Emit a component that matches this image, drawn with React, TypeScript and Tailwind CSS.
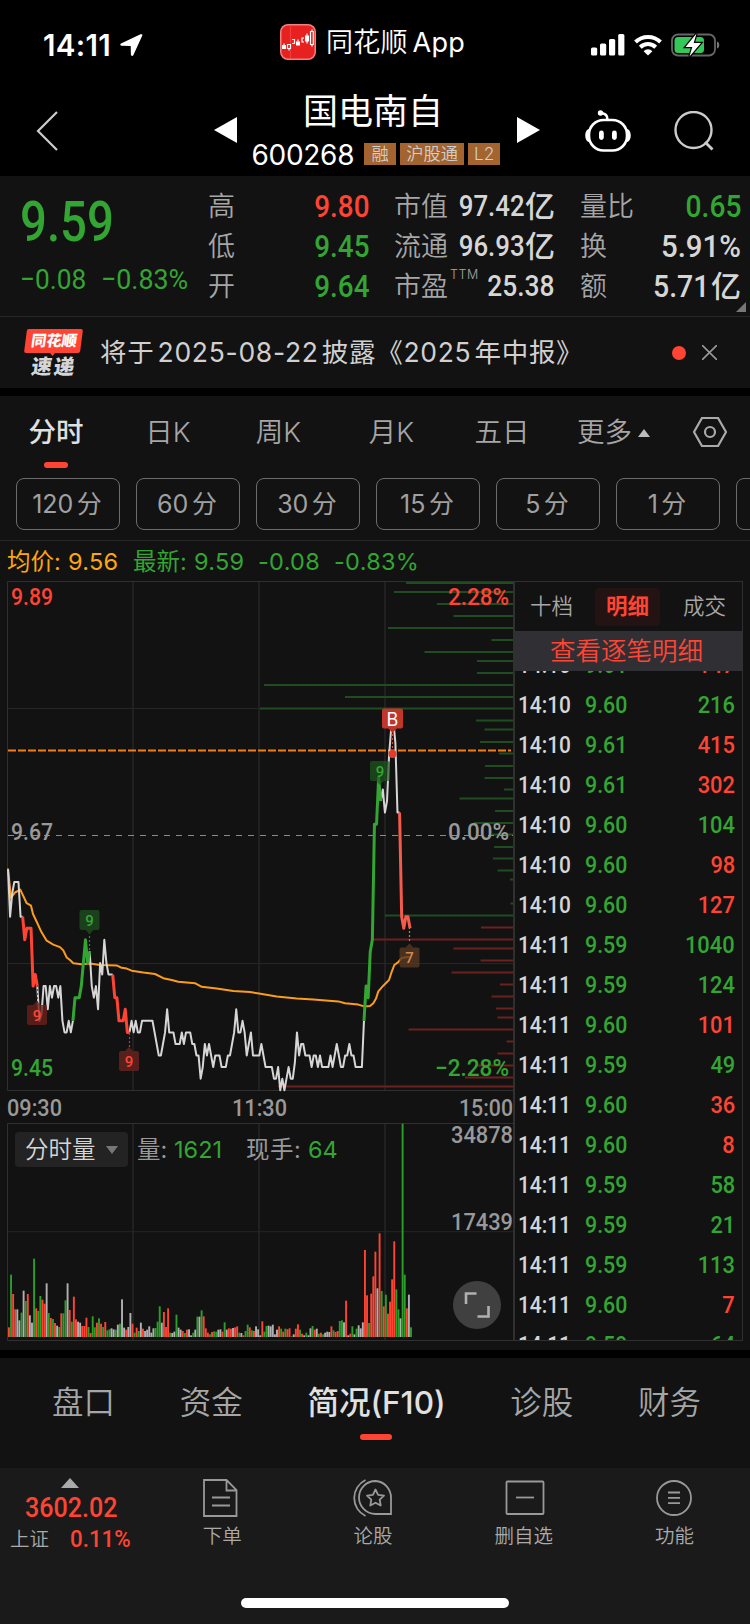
import type { ReactNode } from 'react';
import { clsx } from 'clsx';

const CJK = "font-['Inter','Noto_Sans_CJK_SC',sans-serif]";

const quotes = [
  [
    { label: '高', value: '9.80', tone: 'text-[#ff4433]', size: 'scale-x-[.87] text-[32px]' },
    { label: '低', value: '9.45', tone: 'text-[#33a533]', size: 'scale-x-[.87] text-[32px]' },
    { label: '开', value: '9.64', tone: 'text-[#33a533]', size: 'scale-x-[.87] text-[32px]' },
  ],
  [
    { label: '市值', value: '97.42', unit: '亿', size: 'scale-x-[.86] text-[30px]' },
    { label: '流通', value: '96.93', unit: '亿', size: 'scale-x-[.86] text-[30px]' },
    { label: '市盈', sup: 'TTM', value: '25.38', size: 'scale-x-[.88] text-[30px]' },
  ],
  [
    { label: '量比', value: '0.65', tone: 'text-[#33a533]', size: 'scale-x-[.88] text-[32px]' },
    { label: '换', value: '5.91%', size: 'scale-x-[.92] text-[32px]' },
    { label: '额', value: '5.71', unit: '亿', size: 'scale-x-[.89] text-[32px] mr-[2px]' },
  ],
];

const periods = [
  { label: '分时', width: 'w-[112px]', active: true },
  { label: '日K', width: 'w-[112px]' },
  { label: '周K', width: 'w-[109px]' },
  { label: '月K', width: 'w-[117px]' },
  { label: '五日', width: 'w-[104px]' },
];

const minutes = ['120 分', '60 分', '30 分', '15 分', '5 分', '1 分', ''];

const trades: [string, string, number, 'r' | 'g'][] = [
  ['14:10', '9.61', 147, 'r'],
  ['14:10', '9.60', 216, 'g'],
  ['14:10', '9.61', 415, 'r'],
  ['14:10', '9.61', 302, 'r'],
  ['14:10', '9.60', 104, 'g'],
  ['14:10', '9.60', 98, 'r'],
  ['14:10', '9.60', 127, 'r'],
  ['14:11', '9.59', 1040, 'g'],
  ['14:11', '9.59', 124, 'g'],
  ['14:11', '9.60', 101, 'r'],
  ['14:11', '9.59', 49, 'g'],
  ['14:11', '9.60', 36, 'r'],
  ['14:11', '9.60', 8, 'r'],
  ['14:11', '9.59', 58, 'g'],
  ['14:11', '9.59', 21, 'g'],
  ['14:11', '9.59', 113, 'g'],
  ['14:11', '9.60', 7, 'r'],
  ['14:11', '9.59', 64, 'g'],
];

// Price line: [minute since open, ticks below the previous close]
const segments: { color: string; width: number; pts: [number, number][] }[] = [
  { color: '#d6d6d6', width: 2, pts: [[0, 2.9], [1, 7], [2, 5], [3, 4], [5, 4], [6, 7], [7, 7]] },
  {
    color: '#d6d6d6', width: 2,
    pts: [[14, 13], [15, 16], [16, 15.4], [17, 13], [18, 13], [19, 15], [20, 13], [21, 14], [22, 13], [23, 13], [24, 14], [25, 13], [26, 16], [27, 17], [28, 17], [29, 16], [30, 17], [31, 16]],
  },
  {
    color: '#d6d6d6', width: 2,
    pts: [[39, 10], [40, 13], [41, 14], [42, 13], [43, 15], [44, 11], [45, 12], [46, 9], [47, 11], [48, 12], [50, 12]],
  },
  {
    color: '#d6d6d6', width: 2,
    pts: [
      [58, 17], [59, 16], [60, 17], [61, 16], [62, 17], [63, 17], [64, 16], [69, 16], [70, 17], [72, 19], [73, 19], [74, 18], [75, 17], [76, 15], [77, 17],
      [79, 17], [80, 18], [82, 18], [83, 17], [84, 18], [85, 17], [87, 17], [88, 18], [89, 18], [90, 19], [91, 19], [92, 21], [93, 20], [94, 18], [95, 19],
      [96, 18], [98, 20], [99, 19], [101, 19], [102, 20], [104, 20], [105, 19], [106, 19], [108, 17], [109, 15], [110, 17], [111, 17], [112, 16], [113, 17],
      [114, 19], [116, 17], [117, 19], [120, 19], [121, 18], [123, 20], [126, 20], [127, 21], [128, 21], [129, 20], [130, 22], [131, 21], [132, 22], [133, 21],
      [134, 20], [135, 21], [136, 21], [137, 19.6], [138, 17], [139, 19], [140, 18], [141, 18], [142, 19], [144, 19], [145, 20], [146, 19], [147, 19], [148, 20],
      [149, 19], [150, 20], [153, 20], [154, 19], [155, 20], [156, 19], [157, 18], [158, 19], [159, 20], [160, 20], [161, 19], [162, 19], [163, 18], [164, 19],
      [165, 19], [166, 20], [169, 20], [170, 16],
    ],
  },
  { color: '#d6d6d6', width: 2, pts: [[178, -3], [179, -4], [180, -2], [181, -3], [182, -7], [183, -9.3], [184, -10], [185, -8], [186, -2], [187, -2]] },
  { color: '#ff4433', width: 3, pts: [[7, 7], [8, 9], [9, 8], [11, 8], [12, 13], [13, 12], [14, 13]] },
  { color: '#33a533', width: 3, pts: [[31, 16], [32, 14], [34, 14], [35, 13], [36, 11], [37, 9], [38, 11], [39, 10]] },
  { color: '#ff4433', width: 3, pts: [[50, 12], [51, 14], [52, 14], [53, 16], [55, 16], [56, 15], [57, 17], [58, 17]] },
  { color: '#33a533', width: 3, pts: [[170, 16], [171, 13], [172, 14], [173, 10], [174, 9], [175, -1], [176, -1], [177, -5], [178, -3]] },
  { color: '#f45b4c', width: 3, pts: [[187, -2], [188, 7], [189, 8], [190, 7], [191, 7], [192, 8]] },
];

const average =
  '8,868.5 11,897.8 15,892.5 20.3,889.6 26.7,903.2 31,905.7 33,914 36.7,921.8 41.3,931.8 46.7,940.7 53.3,944.6 60,947.1 63.3,950.4 66.7,957.5 70,960 73.3,963.2 81.7,964.3 90,963.6 100,965 116.7,965.4 121.7,967.8 126.7,968.6 131.7,970.7 143.3,972.5 155,974 163.3,978.2 171.7,980 178.3,981.8 195,983.2 201.7,986.8 216.7,988.6 233.3,991 250,992.1 259,993.6 276.7,996.4 296.7,998.6 313.3,999.6 338.3,1001.4 345,1003.2 358.3,1004.6 364,1006.4 370,1006 373.3,1003.2 376,998.6 378.3,991.4 383.3,985.7 389,980 391.7,971.8 394.3,965 398.3,962.1 401.7,957.9 409.3,956.8';

// Price distribution bars, [y, left edge]; they all end at the right border
const sellDepth = [
  [583, 406], [592, 394], [604, 437], [616, 453.5], [628, 388], [640, 491.5], [652, 424.5], [661, 477], [673, 477], [685, 264], [697, 345], [708.5, 260],
  [720.5, 476], [729.5, 484.5], [742, 480], [753.5, 499], [766, 485], [778, 484.5], [789.5, 504], [798.5, 459.5], [811, 495], [823, 474], [834.5, 492],
  [847, 494], [858.5, 493], [870.5, 497.5], [879.5, 510], [903.5, 510.5], [915.5, 385],
];
const buyDepth = [
  [927.5, 481], [939.5, 372], [948.5, 453.5], [960.5, 480.5], [972.5, 451.5], [984.5, 500], [996.5, 491.5], [1008.5, 496], [1017.5, 497.5], [1029.5, 408.5],
  [1041.5, 506.5], [1053.5, 497.5], [1065.5, 477], [1077.5, 465], [1086.5, 278],
];

// One entry per minute: direction and height, full scale is 640
const volume =
  'r29 g187 r129 r83 w83 w50 g73 w139 g108 r129 w65 w43 g235 r86 g78 g123 r112 r100 w161 g72 r57 g54 r42 w34 g30 r71 g71 g110 w161 r81 g46 r121 r53 w46 w43 r33 r33 r58 g30 r12 g62 g29 r43 g56 r40 g30 r45 g20 g23 w26 w23 g22 w37 g40 w113 w28 r22 w30 w72 r40 g13 r28 g18 w43 r25 w18 w22 w32 w13 w26 g27 g46 g92 w43 r75 r30 r86 g13 w12 w16 g67 w28 w22 r18 g12 r22 w23 w5 g13 w22 g61 w61 g80 r62 r26 r13 g8 r15 g17 g16 w22 w23 r16 g44 w22 r26 r25 w27 r29 r32 g13 w12 r5 g18 g37 r29 g20 r18 w32 w23 w5 r47 g16 g33 w34 w32 w37 w8 w22 r32 g25 r16 g25 r23 r26 g2 w8 r25 r38 g22 r10 w5 g13 w5 w26 g33 r22 w25 g10 r13 g8 w13 w16 w15 r32 g20 r15 r18 g48 g50 w44 r109 w5 r10 g32 w8 g25 w35 w26 w44 r261 r125 g42 r130 r182 r256 w146 r311 g138 r92 g127 r70 r106 r173 r287 g143 g83 w56 g640 g187 r86 w127 g29'.split(' ');

const volumeColor: Record<string, string> = { r: '#ff4433', g: '#2a9f2a', w: '#b0b0b0' };

const minuteX = (i: number) => 8 + i * 2.094;
const tickY = (k: number) => 835.7 + k * 11.57;

function Din({ children, className }: { children: ReactNode; className?: string }) {
  return <span className={clsx("inline-block whitespace-nowrap font-['Roboto',sans-serif] font-medium", className)}>{children}</span>;
}

function StatusBar() {
  return (
    <div className="flex h-[88px] items-center pt-[2px]">
      <div className="flex w-[280px] items-center gap-[6px] pl-[43px]">
        <span className="w-[70px] text-[29.500px] font-semibold tracking-[.3px]">14:11</span>
        <svg width="24" height="24" viewBox="0 0 24 24" fill="#fff">
          <path d="M22.8 1.3c.6.3.7.8.4 1.5L14.300 22.200c-.5 1.100-2.300.9-2.400-.4l-.2-8.800-8.900-.2C1.200 12.700.8 11 2 10.400L21.500 1.300c.5-.2 1-.2 1.300 0z" />
        </svg>
      </div>
      <svg width="36" height="36" viewBox="0 0 36 36" className="mt-[-6px]">
        <rect width="36" height="36" rx="8" fill="#f28080" />
        <rect x="1.500" y="1.500" width="33" height="33" rx="6.500" fill="#e8201f" />
        <path d="M10.500 2v32" stroke="#f0504c" strokeWidth=".7" />
        <path d="M2 21h4v4H2zM16 17.500h4v4h-4zM25 11.500h4v6h-4z" fill="#fff" />
        <path d="M7.500 20.500h3v4h-3zM9 24.500v2M12 15.500h2.500v4H12M24 14h-2v4h2M27 9.500v10M30.500 7.500h2.800v13h-2.800zM32 5.500v2M32 20.500v2M4 19.500v2M18 15.500v2" fill="none" stroke="#fff" strokeWidth="1.200" />
      </svg>
      <span className="ml-[10px] mt-[-3px] flex w-[253px] items-center gap-[5px] text-[27px] font-[350] tracking-[.2px]">
        <span>同花顺</span>
        <span className="text-[27px] font-normal tracking-[.2px]">App</span>
      </span>
      <div className="flex items-center gap-[9px] pl-[12px]">
        <svg width="34" height="22" viewBox="0 0 34 22" fill="#fff">
          <rect y="13.500" width="6.200" height="8" rx="1.500" />
          <rect x="9" y="9.500" width="6.200" height="12" rx="1.500" />
          <rect x="18" y="5" width="6.200" height="16.500" rx="1.500" />
          <rect x="27.200" y="0" width="6.200" height="21.500" rx="1.500" />
        </svg>
        <svg width="28" height="22" viewBox="0 0 28 22" fill="none" stroke="#fff" strokeWidth="4">
          <path d="M1.500 8a18 18 0 0 1 25 0" />
          <path d="M6.300 13.200a11 11 0 0 1 15.400 0" />
          <path d="M14 21.500l-4.400-4.300a6.200 6.200 0 0 1 8.800 0z" fill="#fff" stroke="none" />
        </svg>
        <svg width="49" height="24" viewBox="0 0 49 24">
          <rect x="1" y="1.500" width="43" height="21" rx="6" fill="none" stroke="#666" strokeWidth="1.800" />
          <path d="M46 8.500c3 .6 3 6.400 0 7z" fill="#777" />
          <rect x="3.500" y="4" width="29.500" height="16" rx="3.500" fill="#34c759" />
          <path d="M25.500.5l-11 13.500h6.800l-2.800 9.500L30 10h-7.300z" fill="#fff" stroke="#000" strokeWidth="2.500" paintOrder="stroke" />
        </svg>
      </div>
    </div>
  );
}

function Header() {
  return (
    <div className="flex h-[88px]">
      <div className="w-[214px] pt-[23px] pl-[36px]">
        <svg width="22" height="40" viewBox="0 0 22 40" fill="none" stroke="#ccc" strokeWidth="2.200">
          <path d="M21 1L2 20l19 19" />
        </svg>
      </div>
      <svg width="23" height="26" className="mt-[29px]" fill="#fff"><path d="M0 13L23 0v26z" /></svg>
      <div className="flex w-[280px] flex-col items-center">
        <div className="mr-[8px] mt-[-1px] h-[48px] text-[35px] leading-[48px] font-normal">国电南自</div>
        <div className="mr-[2px] flex h-[38px] items-center gap-[4px]">
          <span className="mr-[6px] pt-[1px] text-[28px] tracking-[-.3px]">600268</span>
          {['融', '沪股通', 'L2'].map((tag) => (
            <span key={tag} className="flex h-[22px] min-w-[32px] items-center justify-center bg-[#a3642f] px-[6px] text-[17.300px] leading-[22px] font-[350] text-[#cfcfcf]">
              {tag}
            </span>
          ))}
        </div>
      </div>
      <svg width="23" height="26" className="mt-[29px]" fill="#fff"><path d="M23 13L0 0v26z" /></svg>
      <svg width="46" height="44" viewBox="0 0 46 44" className="mt-[21px] ml-[45px]" fill="none" stroke="#fff" strokeWidth="2.600">
        <rect x="4" y="11" width="38" height="30.500" rx="14.500" />
        <path d="M22.500 11c0-5-2-6-6-7" />
        <circle cx="15.500" cy="4" r="2.700" fill="#fff" stroke="none" />
        <path d="M4 20c-5 1-5 12 0 13zM42 20c5 1 5 12 0 13z" fill="#fff" stroke="none" />
        <rect x="14" y="21.500" width="4.800" height="9.500" rx="2.400" fill="#fff" stroke="none" />
        <rect x="27" y="21.500" width="4.800" height="9.500" rx="2.400" fill="#fff" stroke="none" />
      </svg>
      <svg width="40" height="40" viewBox="0 0 40 40" className="mt-[23px] ml-[43px]" fill="none" stroke="#ccc" strokeWidth="2.400">
        <circle cx="19.500" cy="19" r="18" />
        <path d="M31 31l7.500 7.500" strokeWidth="2.800" />
      </svg>
    </div>
  );
}

function QuotePanel() {
  return (
    <div className="relative flex h-[141px] border-b border-[#262626] bg-[#121212] pt-[10px]">
      <div className="w-[208px] pl-[20px] text-[#33a533]">
        <div className="mt-[5px] h-[62px]">
          <Din className="origin-left scale-x-[.86] text-[55px] leading-[62px]">9.59</Din>
        </div>
        <div className="mt-[9px] flex h-[36px]">
          <Din className="w-[81px] origin-left scale-x-[.92] text-[28.500px] leading-[36px] font-normal">−0.08</Din>
          <Din className="origin-left scale-x-[.94] text-[28.500px] leading-[36px] font-normal">−0.83%</Din>
        </div>
      </div>
      <div className="flex gap-[25px]">
        {quotes.map((col, i) => (
          <div key={i} className="w-[161px]">
            {col.map((q) => (
              <div key={q.label} className="flex h-[40px] items-center justify-between whitespace-nowrap">
                <span className="relative pt-[2px] text-[27px] font-[350] text-[#a6a6a6]">
                  {q.label}
                  {'sup' in q && q.sup && <sup className="absolute top-[3px] left-[56px] text-[12.500px] leading-[14px] tracking-[.5px]">{q.sup}</sup>}
                </span>
                <span className={clsx('flex items-center', q.tone ?? 'text-[#d6d6d6]')}>
                  <Din className={clsx('origin-right leading-[40px]', q.size)}>{q.value}</Din>
                  {'unit' in q && q.unit && <span className="text-[30px] font-medium">{q.unit}</span>}
                </span>
              </div>
            ))}
          </div>
        ))}
      </div>
      <svg width="10" height="10" className="absolute right-[4px] bottom-[4px]" fill="#777"><path d="M10 0v10H0z" /></svg>
    </div>
  );
}

function NewsBar() {
  return (
    <div className="flex h-[71px] items-center bg-[#121212] pl-[24px]">
      <svg width="60" height="50" viewBox="0 0 60 50" className="font-['Noto_Sans_CJK_SC',sans-serif] font-black">
        <path d="M5 1h52q2 0 1.800 2l-2.600 20q-.3 2-2.400 2H31l-2.500 3-2.500-3H2Q0 25 .2 23L2.800 3Q3 1 5 1z" fill="#ff4433" />
        <text x="9" y="18.500" fontSize="15" textLength="46" lengthAdjust="spacingAndGlyphs" fill="#fff" transform="skewX(-8)">同花顺</text>
        <text x="13" y="46" fontSize="20.500" textLength="43" fill="#d6d6d6" transform="skewX(-8)">速递</text>
      </svg>
      <span className="ml-[16px] text-[26.500px] tracking-[.7px] whitespace-nowrap text-[#d0d0d0] [word-spacing:-5px]">将于 2025-08-22 披露《2025 年中报》</span>
      <span className="mr-[16px] ml-auto size-[14px] rounded-full bg-[#ff4433]" />
      <svg width="15" height="15" className="mr-[33px]" stroke="#999" strokeWidth="1.600"><path d="M0 0l15 15M15 0L0 15" /></svg>
    </div>
  );
}

function PeriodTabs() {
  return (
    <div className="h-[145px] overflow-hidden border-b border-[#262626] bg-[#121212]">
      <div className="flex h-[82px] text-[27.500px] text-[#a6a6a6]">
        {periods.map((p) => (
          <div key={p.label} className={clsx('flex flex-col items-center pt-[15px]', p.width, p.active ? 'font-medium text-[#e0e0e0]' : 'font-[350]')}>
            <span className="leading-[42px]">{p.label}</span>
            {p.active && <span className="mt-[9px] h-[6px] w-[24px] rounded-full bg-[#ff4433]" />}
          </div>
        ))}
        <div className="flex h-[73px] items-center pl-[23px] font-[350]">
          更多
          <svg width="12" height="8" className="ml-[6px]" fill="#bbb"><path d="M6 0l6 8H0z" /></svg>
        </div>
        <svg width="34" height="30" viewBox="0 0 34 30" className="mt-[21px] ml-[43px]" fill="none" stroke="#aaa" strokeWidth="2.200">
          <path d="M9 1h16l8 14-8 14H9L1 15z" />
          <circle cx="17" cy="15" r="5" />
        </svg>
      </div>
      <div className="flex gap-[16px] pl-[16px]">
        {minutes.map((m) => (
          <div key={m} className="flex h-[52px] w-[104px] shrink-0 items-center justify-center rounded-[8px] border border-[#6b6b6b] pt-[1px] pr-[2px] text-[25px] text-[#a0a0a0] [word-spacing:-3.500px]">
            {m}
          </div>
        ))}
      </div>
    </div>
  );
}

interface FlagProps {
  x: number;
  y: number;
  text: string;
  bg: string;
  color: string;
  up?: boolean;
}

function Flag({ x, y, text, bg, color, up }: FlagProps) {
  return (
    <g>
      <rect x={x - 10} y={y - 10} width="20" height="20" rx="2" fill={bg} />
      <path d={up ? `M${x - 4} ${y - 10}l4-4 4 4z` : `M${x - 4} ${y + 10}l4 4 4-4z`} fill={bg} />
      <text x={x} y={y + 5.500} fontSize="15" fontWeight="500" textAnchor="middle" fill={color}>{text}</text>
    </g>
  );
}

function ChartLabel({ x, y, w, fill, children }: { x: number; y: number; w: number; fill: string; children: string }) {
  return (
    <text x={x} y={y} textLength={w} lengthAdjust="spacingAndGlyphs" fontSize="24" fontWeight="500" fill={fill}>{children}</text>
  );
}

function Chart() {
  return (
    <div className="relative w-[513px]">
      <svg width="513" height="760" viewBox="0 581 513 760" className="block font-['Roboto',sans-serif]">
        <g stroke="#262626" strokeWidth="1.500">
          <path d="M133 581v509.500M259 581v509.500M385 581v509.500M133 1123.500v217M259 1123.500v217M385 1123.500v217" />
          <path d="M7.500 708.500H513M7.500 963.500H513M7.500 1231.700H513" strokeWidth="1" />
        </g>
        <path d="M7.500 1090.500v-509H513M7.500 1090.500H513M7.500 1340.500v-217H513M7.500 1340.500H513" fill="none" stroke="#303030" />
        <path d={sellDepth.map(([y, x]) => `M${x} ${y}H513`).join('')} stroke="#1f4d20" strokeWidth="2" />
        <path d={buyDepth.map(([y, x]) => `M${x} ${y}H513`).join('')} stroke="#6b211c" strokeWidth="2" />
        <path d="M8 835.500H513" stroke="#8a8a8a" strokeWidth="1.200" strokeDasharray="6 6" />
        <path d="M8 750.500H511" stroke="#f57c15" strokeWidth="2" strokeDasharray="8 2" />
        <polyline points={average} fill="none" stroke="#fc9c1c" strokeWidth="2" strokeLinejoin="round" />
        {segments.map((s, i) => (
          <polyline key={i} points={s.pts.map(([m, k]) => `${minuteX(m)},${tickY(k)}`).join(' ')} fill="none" stroke={s.color} strokeWidth={s.width} strokeLinejoin="round" />
        ))}

        <g strokeDasharray="2 2" strokeWidth="1.200">
          <path d="M37.500 985v20" stroke="#b04038" />
          <path d="M89.500 932v20" stroke="#2a8a2a" />
          <path d="M129.500 1033v16" stroke="#b04038" />
          <path d="M409.500 927v16" stroke="#c08050" />
          <path d="M392.500 730v24" stroke="#e04030" />
        </g>
        <Flag x={89.500} y={920} text="9" bg="#1b401c" color="#33a533" />
        <Flag x={37} y={1015} text="9" bg="#6b211ccc" color="#ff4433" up />
        <Flag x={129} y={1061} text="9" bg="#58201c" color="#ff4433" up />
        <Flag x={380} y={771} text="9" bg="#1f5a20b0" color="#33a533" />
        <Flag x={409.500} y={957.500} text="7" bg="#573823cc" color="#d08850" up />
        <circle cx="392.500" cy="754" r="4" fill="#e23b2c" />
        <path d="M388 728h9l-4.500 5z" fill="#b83428" />
        <rect x="382" y="708.500" width="21" height="20" rx="2" fill="#c0362a" />
        <text x="392.500" y="725.500" fontSize="18" textAnchor="middle" fill="#fff" className="font-['Inter',sans-serif]">B</text>

        <ChartLabel x={11} y={604.500} w={42} fill="#ff4433">9.89</ChartLabel>
        <ChartLabel x={448} y={604.500} w={61} fill="#ff4433">2.28%</ChartLabel>
        <ChartLabel x={11} y={840} w={42} fill="#999">9.67</ChartLabel>
        <ChartLabel x={448} y={840} w={61} fill="#999">0.00%</ChartLabel>
        <ChartLabel x={11} y={1076} w={42} fill="#33a533">9.45</ChartLabel>
        <ChartLabel x={435} y={1076} w={74} fill="#33a533">−2.28%</ChartLabel>
        <ChartLabel x={7} y={1116} w={55} fill="#999">09:30</ChartLabel>
        <ChartLabel x={232} y={1116} w={55} fill="#999">11:30</ChartLabel>
        <ChartLabel x={459} y={1116} w={54} fill="#999">15:00</ChartLabel>
        <ChartLabel x={451} y={1143} w={62} fill="#999">34878</ChartLabel>
        <ChartLabel x={451} y={1230} w={62} fill="#999">17439</ChartLabel>

        {volume.map((v, i) => {
          const h = Number(v.slice(1)) / 3;
          return <rect key={i} x={minuteX(i)} y={1337 - h} width="1.900" height={h} fill={volumeColor[v[0]]} />;
        })}

        <circle cx="477" cy="1305" r="24" fill="#404040" />
        <path d="M466 1304v-10.500h10.500M488.500 1306v10.500h-11" fill="none" stroke="#b0b0b0" strokeWidth="2.600" />
      </svg>
      <div className="absolute top-[550px] left-[15px] flex items-center text-[23.500px] text-[#999]">
        <div className="flex h-[35px] w-[113px] items-center rounded-[4px] bg-[#232323] pt-[1px] pl-[10px] font-[350] text-[#d6d6d6]">
          分时量
          <svg width="12" height="8" className="ml-[10px]" fill="#777"><path d="M0 0h12L6 8z" /></svg>
        </div>
        <span className="ml-[9px] w-[37px] pt-[1px]">量:</span>
        <span className="w-[72px] pt-[1px] text-[#33a533]">1621</span>
        <span className="w-[62px] pt-[1px] tracking-[.5px]">现手:</span>
        <span className="pt-[1px] text-[#33a533]">64</span>
      </div>
    </div>
  );
}

function TradeList() {
  return (
    <div className="flex h-[760px] w-[230px] flex-col border border-l-2 border-[#303030]">
      <div className="flex h-[49px] shrink-0 items-center pl-[15px] text-[21.500px] font-[350] text-[#a6a6a6]">
        <span className="w-[65px]">十档</span>
        <span className="flex h-[38px] w-[65px] items-center justify-center rounded-[4px] bg-[#241313] font-bold text-[#ff4433]">明细</span>
        <span className="pl-[23px]">成交</span>
      </div>
      <div className="flex h-[40px] shrink-0 items-center justify-center bg-[#302f34] pt-[1px] pr-[4px] text-[25.500px] font-[350] text-[#ff4433]">查看逐笔明细</div>
      <div className="flex-1 overflow-hidden">
        <div className="mt-[-26px]">
          {trades.map(([time, price, vol, side], i) => (
            <div key={i} className="flex h-[40px] items-center text-[24px]">
              <Din className="w-[67px] origin-left translate-x-[3px] scale-x-[.87] text-[#d6d6d6]">{time}</Din>
              <Din className="w-[60px] origin-left translate-x-[3px] scale-x-[.89] text-[#33a533]">{price}</Din>
              <Din className={clsx('mr-[7px] ml-auto origin-right scale-x-[.91]', side === 'r' ? 'text-[#ff4433]' : 'text-[#33a533]')}>{vol}</Din>
            </div>
          ))}
        </div>
      </div>
    </div>
  );
}

function NavItem({ label, children }: { label: string; children: ReactNode }) {
  return (
    <div className="flex w-[151px] flex-col items-center pt-[10px]">
      <svg width="42" height="40" viewBox="0 0 42 40" fill="none" stroke="#999" strokeWidth="1.800">{children}</svg>
      <span className="mt-[4px] text-[19.500px] leading-[28px] font-[350] text-[#aaa]">{label}</span>
    </div>
  );
}

function BottomBar() {
  return (
    <div className="h-[156px] bg-[#1a1a1a]">
      <div className="flex h-[130px]">
        <div className="w-[147px] pt-[10px] text-[#ff4433]">
          <svg width="18" height="10" className="ml-[61px]" fill="#aaa"><path d="M9 0l9 10H0z" /></svg>
          <div className="h-[38px] pt-[1px] pl-[25px]">
            <Din className="origin-left scale-x-[.88] text-[28.500px] leading-[38px]">3602.02</Din>
          </div>
          <div className="flex h-[26px] items-center pl-[10px]">
            <span className="w-[60px] pt-[2px] text-[19.500px] font-[350] text-[#aaa]">上证</span>
            <Din className="origin-left scale-x-[.93] text-[24px]">0.11%</Din>
          </div>
        </div>
        <NavItem label="下单">
          <path d="M3 2h22.500l10 10v26H3zM25.500 2v10.500h10M11 19.500h18M11 27.500h18" />
        </NavItem>
        <NavItem label="论股">
          <path d="M23.500 3a16.500 16.500 0 0 0 0 33H39V20A16.500 16.500 0 0 0 23.500 3z" />
          <path d="M13.500 2a20 20 0 0 0 0 36" />
          <path d="M23.500 11.500l2.600 5.300 5.900.8-4.300 4.100 1 5.800-5.200-2.800-5.200 2.800 1-5.800-4.300-4.100 5.900-.8z" strokeLinejoin="round" />
        </NavItem>
        <NavItem label="删自选">
          <rect x="3.500" y="3.500" width="37" height="32.500" rx="1" />
          <path d="M13 19.500h18" />
        </NavItem>
        <NavItem label="功能">
          <circle cx="20" cy="20" r="17" />
          <path d="M14 14.500h12M14 19.800h12M14 25.200h12" />
        </NavItem>
      </div>
      <div className="mx-auto h-[10px] w-[268px] rounded-full bg-white" />
    </div>
  );
}

export default function App() {
  return (
    <div className={clsx('h-[1624px] w-[750px] overflow-hidden bg-black text-white', CJK)}>
      <StatusBar />
      <Header />
      <QuotePanel />
      <NewsBar />
      <div className="h-[8px]" />
      <PeriodTabs />

      <div className="h-[809px] bg-[#121212]">
        <div className="flex h-[40px] items-center pt-[2px] pl-[7px] text-[23.500px] whitespace-nowrap text-[#33a533]">
          <span className="w-[61px] text-[#fda710]">均价:</span>
          <span className="w-[65px] tracking-[.3px] text-[#fda710]">9.56</span>
          <span className="w-[61px]">最新:</span>
          <span className="w-[64px] tracking-[.3px]">9.59</span>
          <span className="w-[76px] tracking-[.3px]">-0.08</span>
          <span className="tracking-[.3px]">-0.83%</span>
        </div>
        <div className="flex">
          <Chart />
          <TradeList />
        </div>
      </div>

      <div className="mt-[8px] flex h-[110px] justify-between bg-[#121212] pr-[49px] pl-[52px] text-[31.500px] text-[#a6a6a6]">
        {['盘口', '资金', '简况(F10)', '诊股', '财务'].map((t) => (
          <div key={t} className={clsx('flex flex-col items-center pt-[23px]', t.startsWith('简况') ? 'font-medium text-[#e0e0e0]' : 'font-[350]')}>
            <span className="leading-[44px]">{t}</span>
            {t.startsWith('简况') && <span className="mt-[9px] h-[6px] w-[32px] rounded-full bg-[#ff4433]" />}
          </div>
        ))}
      </div>
      <BottomBar />
    </div>
  );
}
